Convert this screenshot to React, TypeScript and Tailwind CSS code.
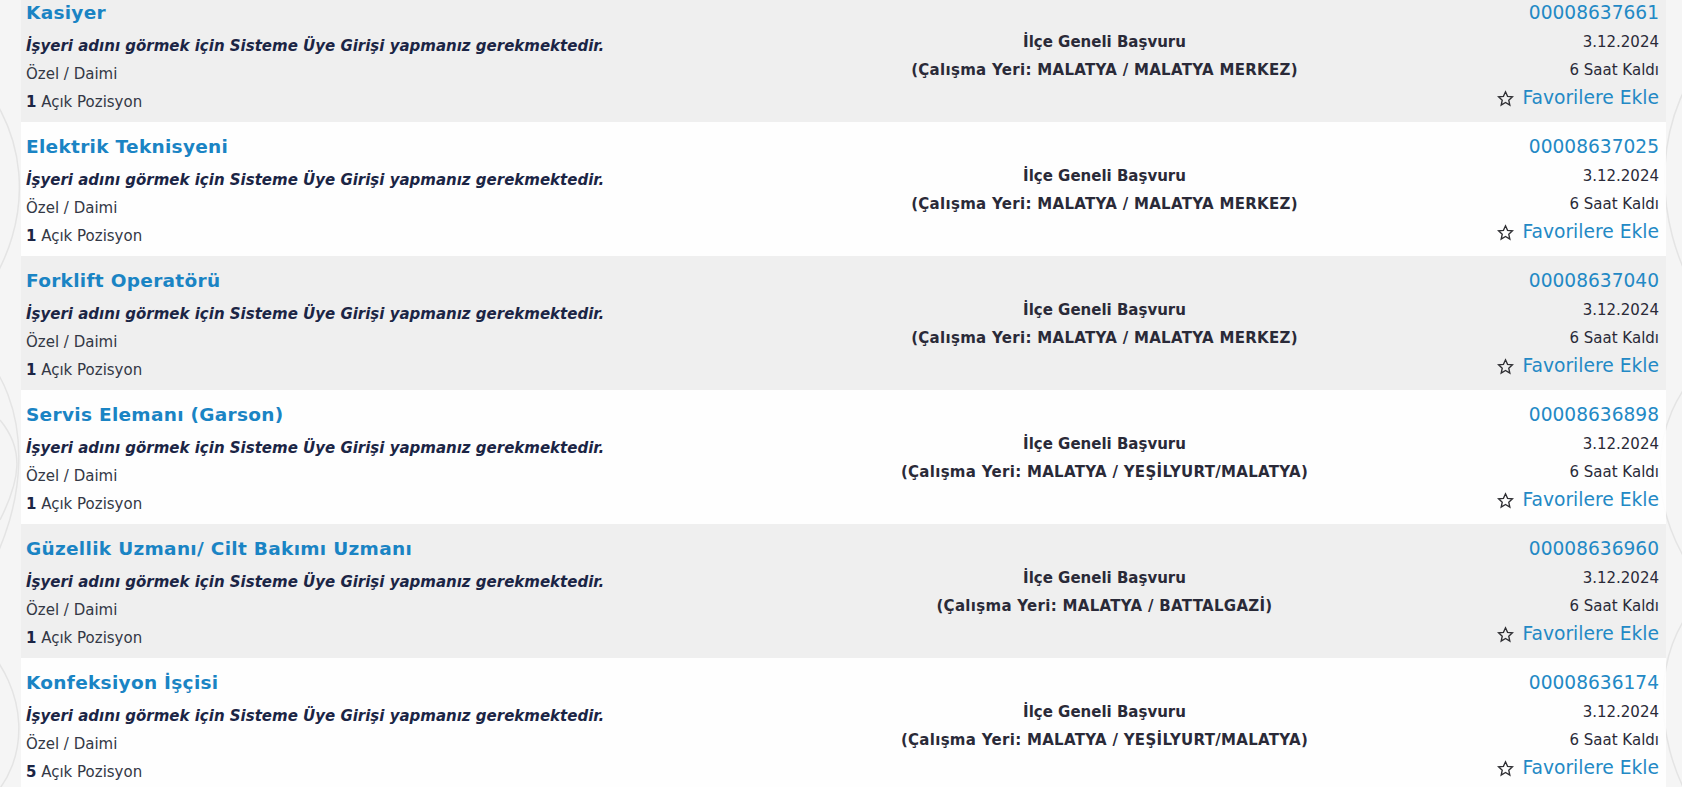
import React from 'react';

interface Job {
  title: string;
  number: string;
  place: string;
  positions: number;
}

const JOBS: Job[] = [
  { title: 'Kasiyer', number: '00008637661', place: 'MALATYA / MALATYA MERKEZ', positions: 1 },
  { title: 'Elektrik Teknisyeni', number: '00008637025', place: 'MALATYA / MALATYA MERKEZ', positions: 1 },
  { title: 'Forklift Operatörü', number: '00008637040', place: 'MALATYA / MALATYA MERKEZ', positions: 1 },
  { title: 'Servis Elemanı (Garson)', number: '00008636898', place: 'MALATYA / YEŞİLYURT/MALATYA', positions: 1 },
  { title: 'Güzellik Uzmanı/ Cilt Bakımı Uzmanı', number: '00008636960', place: 'MALATYA / BATTALGAZİ', positions: 1 },
  { title: 'Konfeksiyon İşçisi', number: '00008636174', place: 'MALATYA / YEŞİLYURT/MALATYA', positions: 5 },
];

function StarOutline() {
  return (
    <svg width="17" height="17" viewBox="0 0 24 24" className="shrink-0">
      <polygon
        points="12,2.5 14.9,8.9 21.8,9.6 16.6,14.3 18.1,21.2 12,17.6 5.9,21.2 7.4,14.3 2.2,9.6 9.1,8.9"
        fill="none"
        stroke="#2f2f33"
        strokeWidth="1.9"
        strokeLinejoin="miter"
      />
    </svg>
  );
}

function Backdrop() {
  return (
    <svg className="absolute inset-0 h-full w-full" viewBox="0 0 1682 787" preserveAspectRatio="none">
      <g fill="none" stroke="#e4e4e4" strokeWidth="1.5">
        <path d="M-40 60 C 30 120, 40 220, -20 300" />
        <path d="M-30 340 C 40 400, 30 520, -30 600" />
        <path d="M0 420 C 25 450, 20 480, 0 520" />
        <path d="M-20 640 C 30 690, 30 760, -10 800" />
        <path d="M1720 40 C 1650 110, 1650 220, 1700 300" />
        <path d="M1710 360 C 1640 420, 1650 520, 1700 580" />
        <path d="M1700 600 C 1650 650, 1655 740, 1690 800" />
      </g>
    </svg>
  );
}

export default function App() {
  return (
    <div className="relative h-[787px] overflow-hidden bg-[#f5f5f5] font-[DejaVu_Sans,Verdana,sans-serif]">
      <Backdrop />
      <div className="relative -mt-[12px] ml-[21px] mr-[16px]">
        {JOBS.map((job, i) => (
          <div
            key={job.number}
            className={`grid h-[134px] grid-cols-[822px_1fr_300px] ${i % 2 === 0 ? 'bg-[#efefef]' : 'bg-white/90'}`}
          >
            <div className="pl-[5px] pt-[11px]">
              <div className="h-[28px] text-[18.5px] font-bold leading-[28px] tracking-[0.3px] text-[#1a84c4]">
                {job.title}
              </div>
              <div className="mt-[5px] h-[28px] text-[15px] font-bold italic leading-[28px] text-[#1b2545]">
                İşyeri adını görmek için Sisteme Üye Girişi yapmanız gerekmektedir.
              </div>
              <div className="h-[28px] text-[15px] leading-[28px] text-[#333845]">Özel / Daimi</div>
              <div className="h-[28px] text-[15px] leading-[28px] text-[#333845]">
                <span className="font-bold text-[#1b2545]">{job.positions}</span> Açık Pozisyon
              </div>
            </div>
            <div className="pt-[40px] text-center text-[15px] font-bold leading-[28px] text-[#2a2a38]">
              <div>İlçe Geneli Başvuru</div>
              <div className="tracking-[0.3px]">(Çalışma Yeri: {job.place})</div>
            </div>
            <div className="flex flex-col items-end pr-[7px] pt-[11px] text-right">
              <div className="h-[28px] text-[18.6px] leading-[28px] text-[#2389c5]">{job.number}</div>
              <div className="mt-[1px] h-[28px] text-[15px] leading-[28px] text-[#2a2a38]">3.12.2024</div>
              <div className="h-[28px] text-[15px] leading-[28px] text-[#2a2a38]">6 Saat Kaldı</div>
              <div className="flex h-[28px] items-center gap-[8px] text-[18.7px] leading-[28px] text-[#2389c5]">
                <StarOutline />
                <span>Favorilere Ekle</span>
              </div>
            </div>
          </div>
        ))}
      </div>
    </div>
  );
}
